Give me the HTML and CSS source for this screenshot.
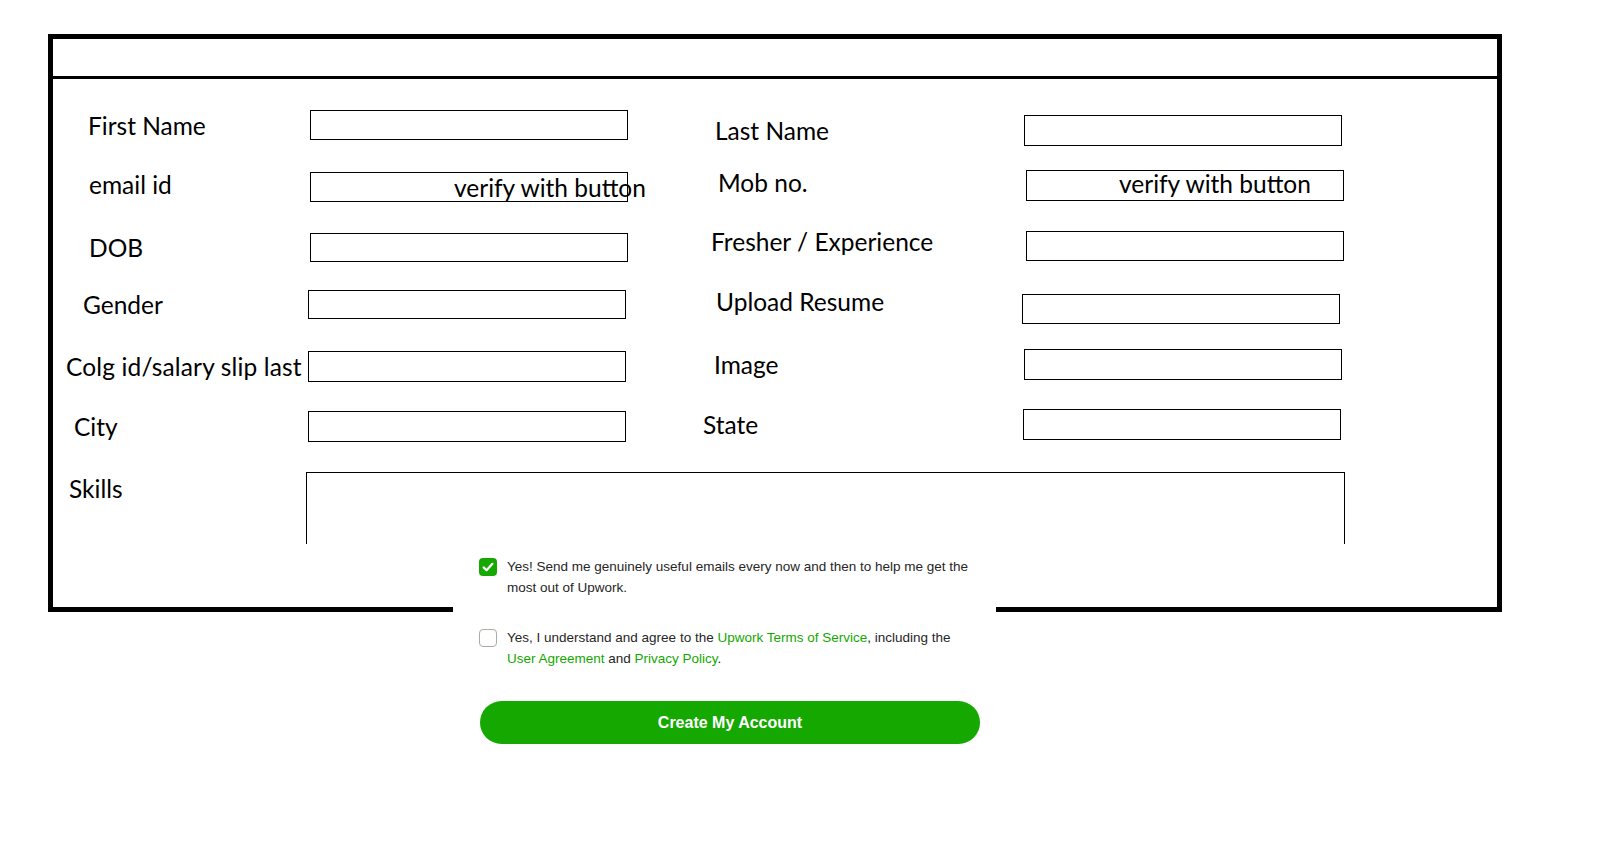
FILE: index.html
```html
<!DOCTYPE html>
<html lang="en">
<head>
<meta charset="utf-8">
<title>Registration form mockup</title>
<link rel="stylesheet" href="styles.css">
</head>
<body>
<div class="frame">
  <div class="frame-head"></div>
  <div class="form">
    <div class="cols">
      <div class="col col-left">
        <div class="row"><span class="lbl">First Name</span><div class="box"></div></div>
        <div class="row"><span class="lbl lbl-up3">email id</span><div class="box"><span class="hint hint-email">verify with button</span></div></div>
        <div class="row"><span class="lbl">DOB</span><div class="box"></div></div>
        <div class="row"><span class="lbl">Gender</span><div class="box"></div></div>
        <div class="row"><span class="lbl">Colg id/salary slip last</span><div class="box"></div></div>
        <div class="row"><span class="lbl">City</span><div class="box"></div></div>
      </div>
      <div class="col col-right">
        <div class="row"><span class="lbl">Last Name</span><div class="box"></div></div>
        <div class="row"><span class="lbl lbl-up3">Mob no.</span><div class="box"><span class="hint hint-mob">verify with button</span></div></div>
        <div class="row"><span class="lbl lbl-up5">Fresher / Experience</span><div class="box"></div></div>
        <div class="row"><span class="lbl lbl-up8">Upload Resume</span><div class="box"></div></div>
        <div class="row"><span class="lbl">Image</span><div class="box"></div></div>
        <div class="row"><span class="lbl">State</span><div class="box"></div></div>
      </div>
    </div>
    <div class="skills-row">
      <span class="lbl skills-lbl">Skills</span>
      <div class="skills-box"></div>
    </div>
  </div>
</div>

<div class="consent">
  <div class="check-row">
    <span class="check check-on">
      <svg viewBox="0 0 18 18" width="18" height="18"><path d="M4.6 9.4 L7.6 12.3 L13.4 5.8" fill="none" stroke="#fff" stroke-width="2.2" stroke-linecap="round" stroke-linejoin="round"/></svg>
    </span>
    <p class="check-text">Yes! Send me genuinely useful emails every now and then to help me get the most out of Upwork.</p>
  </div>
  <div class="check-row check-row-2">
    <span class="check check-off"></span>
    <p class="check-text">Yes, I understand and agree to the <a class="lnk">Upwork Terms of Service</a>, including the <a class="lnk">User Agreement</a> and <a class="lnk">Privacy Policy</a>.</p>
  </div>
  <button class="create-btn" type="button">Create My Account</button>
</div>
</body>
</html>
```

FILE: styles.css
```css
html, body {
  margin: 0;
  padding: 0;
  background: #fff;
}

body {
  font-family: Lato, "Open Sans", sans-serif;
  color: #000;
}

.frame {
  box-sizing: border-box;
  width: 1454px;
  height: 578px;
  margin: 34px 0 0 48px;
  border: 5px solid #000;
}

.frame-head {
  height: 37px;
  border-bottom: 3px solid #000;
}

.form {
  padding-top: 31px;
}

.cols {
  display: flex;
  align-items: flex-start;
}

.col-left {
  width: 607px;
  flex: none;
}

.col-right {
  padding-top: 5px;
}

.row {
  display: flex;
  align-items: center;
  height: 30px;
}

.lbl {
  box-sizing: border-box;
  flex: none;
  font-size: 24.5px;
  line-height: 29px;
  white-space: nowrap;
  color: #000;
}

.box {
  box-sizing: border-box;
  flex: none;
  width: 318px;
  height: 100%;
  border: 1px solid #000;
  display: flex;
  align-items: center;
  white-space: nowrap;
}

.hint {
  font-size: 24.5px;
  line-height: 29px;
}

.hint-email {
  padding-left: 143px;
  padding-top: 1px;
}

.hint-mob {
  padding-left: 92px;
  padding-bottom: 4px;
}

/* left column rows */
.col-left .row:nth-child(1) .lbl { padding-left: 35px; width: 257px; }
.col-left .row:nth-child(2) { margin-top: 32px; }
.col-left .row:nth-child(2) .lbl { padding-left: 36px; width: 257px; }
.col-left .row:nth-child(3) { margin-top: 31px; height: 29px; }
.col-left .row:nth-child(3) .lbl { padding-left: 36px; width: 257px; }
.col-left .row:nth-child(4) { margin-top: 28px; height: 29px; }
.col-left .row:nth-child(4) .lbl { padding-left: 30px; width: 255px; }
.col-left .row:nth-child(5) { margin-top: 32px; height: 31px; }
.col-left .row:nth-child(5) .lbl { padding-left: 13px; width: 255px; letter-spacing: 0.15px; }
.col-left .row:nth-child(6) { margin-top: 29px; height: 31px; }
.col-left .row:nth-child(6) .lbl { padding-left: 21px; width: 255px; }

/* right column rows */
.col-right .row:nth-child(1) { height: 31px; }
.col-right .row:nth-child(1) .lbl { padding-left: 55px; width: 364px; }
.col-right .row:nth-child(2) { margin-top: 24px; height: 31px; }
.col-right .row:nth-child(2) .lbl { padding-left: 58px; width: 366px; }
.col-right .row:nth-child(3) { margin-top: 30px; }
.col-right .row:nth-child(3) .lbl { padding-left: 51px; width: 366px; }
.col-right .row:nth-child(4) { margin-top: 33px; }
.col-right .row:nth-child(4) .lbl { padding-left: 56px; width: 362px; }
.col-right .row:nth-child(5) { margin-top: 25px; height: 31px; }
.col-right .row:nth-child(5) .lbl { padding-left: 54px; width: 364px; }
.col-right .row:nth-child(6) { margin-top: 29px; height: 31px; }
.col-right .row:nth-child(6) .lbl { padding-left: 43px; width: 363px; }

.lbl-up3 { margin-bottom: 6px; }
.lbl-up5 { margin-bottom: 10px; }
.lbl-up8 { margin-bottom: 16px; }

.skills-row {
  display: flex;
  align-items: flex-start;
  margin-top: 30px;
}

.skills-lbl {
  padding-left: 16px;
  width: 253px;
  margin-top: 2px;
}

.skills-box {
  box-sizing: border-box;
  width: 1039px;
  height: 72px;
  border: 1px solid #000;
  border-bottom: none;
}

/* pasted consent block (sits over the frame's bottom border) */
.consent {
  position: absolute;
  left: 453px;
  top: 545px;
  box-sizing: border-box;
  width: 543px;
  height: 230px;
  padding: 11px 0 0 26px;
  background: #fff;
  font-family: "Liberation Sans", Arial, sans-serif;
  font-size: 13.5px;
  line-height: 21px;
  color: #262626;
}

.check-row {
  display: flex;
  align-items: flex-start;
  gap: 10px;
}

.check-row-2 {
  margin-top: 29px;
}

.check {
  box-sizing: border-box;
  flex: none;
  width: 18px;
  height: 18px;
  margin-top: 2px;
  border-radius: 4px;
  display: flex;
  align-items: center;
  justify-content: center;
}

.check-on {
  background: #14a800;
}

.check-off {
  border: 1.5px solid #a5afa2;
  background: #fff;
}

.check-text {
  margin: 0;
  width: 466px;
}

.lnk {
  color: #14a800;
  text-decoration: none;
}

.create-btn {
  display: block;
  margin: 32px 0 0 1px;
  width: 500px;
  height: 43px;
  border: none;
  border-radius: 22px;
  background: #14a800;
  color: #fff;
  font-family: "Liberation Sans", Arial, sans-serif;
  font-size: 16px;
  font-weight: 700;
  padding: 0;
}
```
